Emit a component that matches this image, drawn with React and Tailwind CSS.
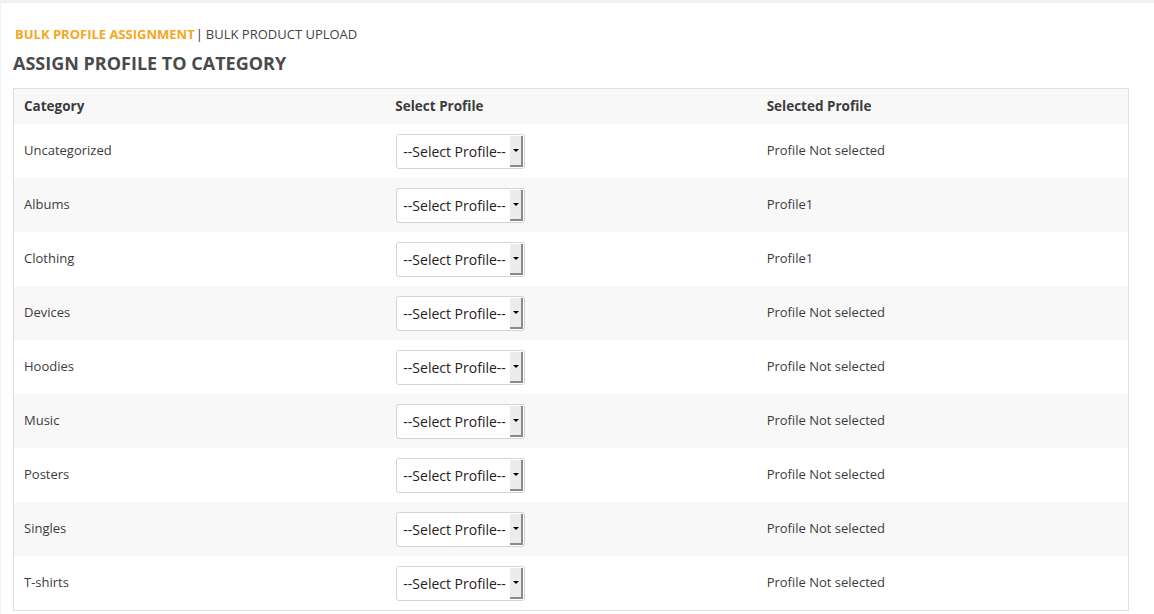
const rows = [
  { name: "Uncategorized", selected: "Profile Not selected" },
  { name: "Albums", selected: "Profile1" },
  { name: "Clothing", selected: "Profile1" },
  { name: "Devices", selected: "Profile Not selected" },
  { name: "Hoodies", selected: "Profile Not selected" },
  { name: "Music", selected: "Profile Not selected" },
  { name: "Posters", selected: "Profile Not selected" },
  { name: "Singles", selected: "Profile Not selected" },
  { name: "T-shirts", selected: "Profile Not selected" },
];

const ProfileSelect = () => (
  <div className="flex h-[35px] w-[129px] items-center rounded-[3px] border border-[#d4d4d4] bg-white pl-[6px] pr-[1px]">
    <span className="flex-1 text-[14px] text-[#222]">--Select Profile--</span>
    <span className="flex h-[31px] w-[13px] items-center justify-center border-r-2 border-b-2 border-[#8a8a8a] bg-[#ececec]">
      <span className="h-0 w-0 border-x-[3px] border-t-[3px] border-x-transparent border-t-black" />
    </span>
  </div>
);

export default function App() {
  return (
    <div
      className="min-h-[614px] bg-[#f1f1f1] pt-[3px] pl-[1px]"
      style={{ fontFamily: '"Open Sans", "Noto Sans", sans-serif' }}
    >
      <div className="min-h-[611px] bg-white pl-[12px] pr-[25px]">
        <div className="flex h-[38px] items-end pl-[2px] text-[13px] leading-none">
          <span className="font-bold text-[#f5a81c]">BULK PROFILE ASSIGNMENT</span>
          <span className="pl-[1px] pr-[3px] text-[#333]">|</span>
          <span className="text-[#444]">BULK PRODUCT UPLOAD</span>
        </div>
        <h1 className="mt-[9px] h-[26px] text-[18px] font-bold leading-[26px] text-[#4a4a4a]">
          ASSIGN PROFILE TO CATEGORY
        </h1>
        <div className="mt-[12px] border border-[#e2e2e2]">
          <div className="grid h-[35px] grid-cols-3 items-center bg-[#f8f8f8] text-[13.5px] font-bold text-[#3c3c3c]">
            <div className="pl-[10px]">Category</div>
            <div className="pl-[10px]">Select Profile</div>
            <div className="pl-[10px]">Selected Profile</div>
          </div>
          {rows.map((row, i) => (
            <div
              key={row.name}
              className={`grid h-[54px] grid-cols-3 items-center text-[13px] text-[#3c3c3c] ${
                i % 2 === 1 ? "bg-[#f8f8f8]" : "bg-white"
              }`}
            >
              <div className="pl-[10px]">{row.name}</div>
              <div className="pl-[11px]">
                <ProfileSelect />
              </div>
              <div className="pl-[10px]">{row.selected}</div>
            </div>
          ))}
        </div>
      </div>
    </div>
  );
}
